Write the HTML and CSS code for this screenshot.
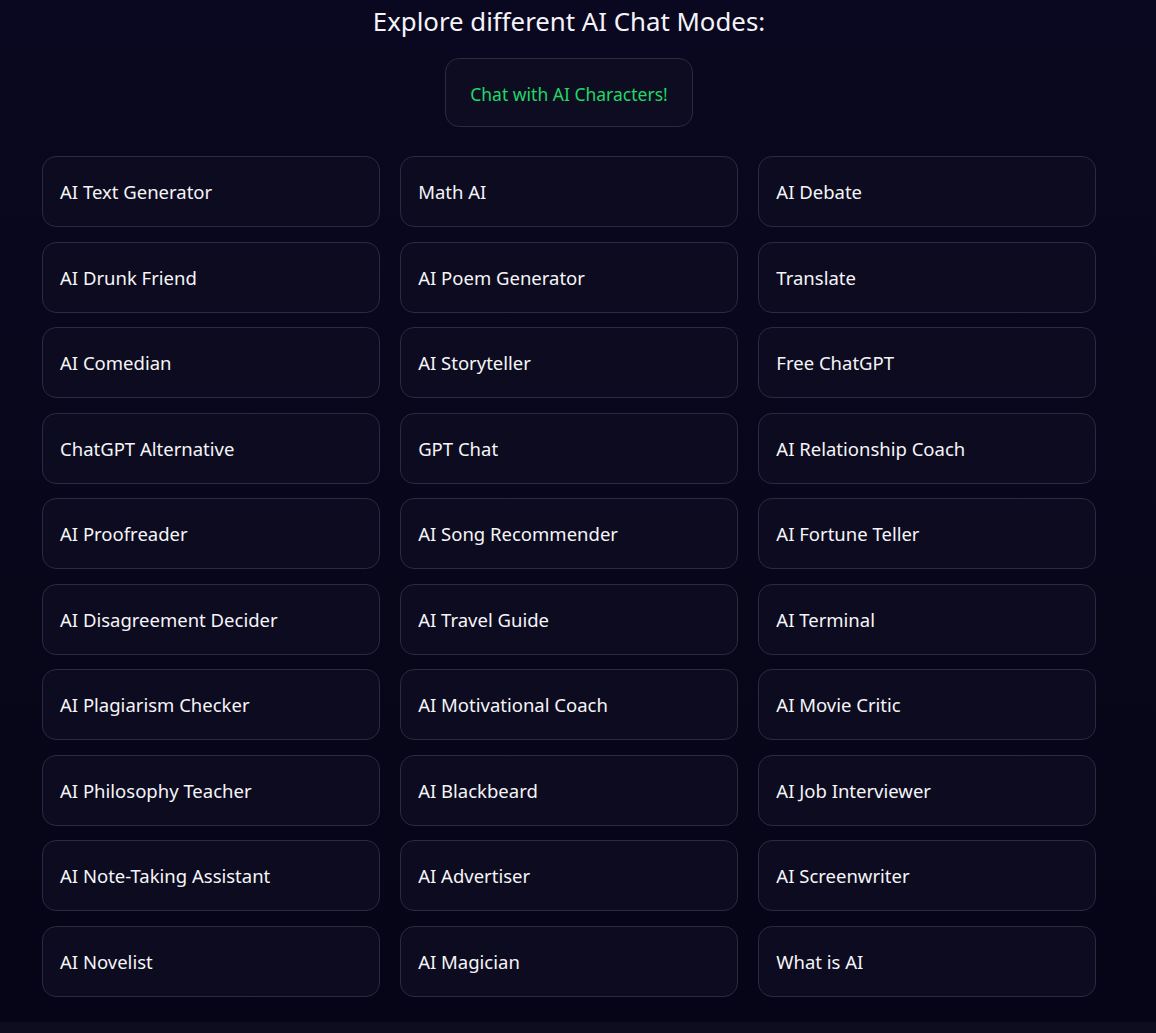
FILE: index.html
```html
<!DOCTYPE html>
<html lang="en">

<head>
    <meta charset="UTF-8">
    <meta name="viewport" content="width=device-width, initial-scale=1.0">
    <title>AI Chat Modes</title>
    <link rel="stylesheet" href="styles.css">
</head>

<body>
    <div class="page">
        <div class="modes">
            <h2 class="title">Explore different AI Chat Modes:</h2>
            <div class="featured">
                <a href="#" class="featuredBtn">Chat with AI Characters!</a>
            </div>
            <div class="grid">
                <a href="#" class="mode">AI Text Generator</a>
                <a href="#" class="mode">Math AI</a>
                <a href="#" class="mode">AI Debate</a>
                <a href="#" class="mode">AI Drunk Friend</a>
                <a href="#" class="mode">AI Poem Generator</a>
                <a href="#" class="mode">Translate</a>
                <a href="#" class="mode">AI Comedian</a>
                <a href="#" class="mode">AI Storyteller</a>
                <a href="#" class="mode">Free ChatGPT</a>
                <a href="#" class="mode">ChatGPT Alternative</a>
                <a href="#" class="mode">GPT Chat</a>
                <a href="#" class="mode">AI Relationship Coach</a>
                <a href="#" class="mode">AI Proofreader</a>
                <a href="#" class="mode">AI Song Recommender</a>
                <a href="#" class="mode">AI Fortune Teller</a>
                <a href="#" class="mode">AI Disagreement Decider</a>
                <a href="#" class="mode">AI Travel Guide</a>
                <a href="#" class="mode">AI Terminal</a>
                <a href="#" class="mode">AI Plagiarism Checker</a>
                <a href="#" class="mode">AI Motivational Coach</a>
                <a href="#" class="mode">AI Movie Critic</a>
                <a href="#" class="mode">AI Philosophy Teacher</a>
                <a href="#" class="mode">AI Blackbeard</a>
                <a href="#" class="mode">AI Job Interviewer</a>
                <a href="#" class="mode">AI Note-Taking Assistant</a>
                <a href="#" class="mode">AI Advertiser</a>
                <a href="#" class="mode">AI Screenwriter</a>
                <a href="#" class="mode">AI Novelist</a>
                <a href="#" class="mode">AI Magician</a>
                <a href="#" class="mode">What is AI</a>
            </div>
        </div>
        <div class="footerStrip"></div>
    </div>
</body>

</html>
```

FILE: styles.css
```css
html, body {
    margin: 0;
    padding: 0;
}

body {
    background: #0e0d1f;
    font-family: "Noto Sans", "Noto Sans CJK KR", sans-serif;
    color: #f2f2f5;
}

.page {
    width: 1156px;
    height: 1033px;
    display: flex;
    flex-direction: column;
}

.modes {
    height: 1022px;
    box-sizing: border-box;
    padding: 0 0 0 42px;
    background: linear-gradient(180deg, #0a0820 0%, #080619 60%, #060417 100%);
}

.title {
    width: 1054px;
    margin: 0;
    padding-top: 3px;
    text-align: center;
    font-size: 25.8px;
    font-weight: 400;
    line-height: 36px;
    color: #f4f4f8;
}

.featured {
    width: 1054px;
    display: flex;
    justify-content: center;
    margin-top: 19px;
}

.featuredBtn {
    display: flex;
    align-items: center;
    justify-content: center;
    width: 248px;
    height: 69px;
    box-sizing: border-box;
    padding-top: 2px;
    border: 1px solid #2b2a40;
    border-radius: 14px;
    background: #0e0c20;
    color: #1fd869;
    font-size: 17.5px;
    text-decoration: none;
}

.grid {
    width: 1054px;
    margin-top: 29px;
    display: grid;
    grid-template-columns: repeat(3, 1fr);
    column-gap: 20.5px;
    row-gap: 14.5px;
}

.mode {
    display: flex;
    align-items: center;
    height: 71px;
    box-sizing: border-box;
    padding: 0 17px;
    border: 1px solid #2b2a40;
    border-radius: 14px;
    background: #0d0b1f;
    color: #f5f5f8;
    font-size: 18.5px;
    text-decoration: none;
}

.footerStrip {
    flex: 1;
    background: #0e0d1f;
}
```
